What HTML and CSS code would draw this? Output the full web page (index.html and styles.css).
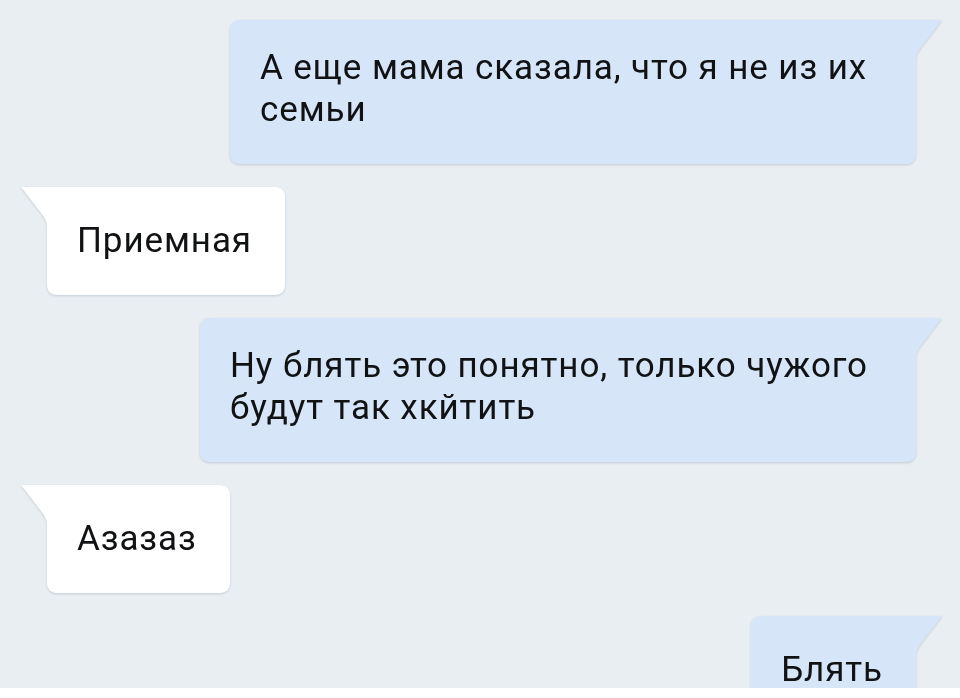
FILE: index.html
```html
<!DOCTYPE html>
<html lang="ru">
<head>
<meta charset="utf-8">
<title>Чат</title>
<link rel="stylesheet" href="styles.css">
</head>
<body>
<div class="screen">
  <div class="chat">
    <div class="msg in ghost" aria-hidden="true"></div>
    <div class="msg out w-686">А еще мама сказала, что я не из их семьи</div>
    <div class="msg in">Приемная</div>
    <div class="msg out w-716">Ну блять это понятно, только чужого будут так хкйтить</div>
    <div class="msg in">Азазаз</div>
    <div class="msg out">Блять</div>
  </div>
  <div class="composer"></div>
</div>
</body>
</html>
```

FILE: styles.css
```css
* { box-sizing: border-box; }

html, body {
  margin: 0;
  padding: 0;
  background: #e9eef2;
}

.screen {
  width: 960px;
  height: 698px;
  display: flex;
  flex-direction: column;
  overflow: hidden;
}

.chat {
  flex: 1;
  min-height: 0;
  overflow: hidden;
  display: flex;
  flex-direction: column;
  align-items: flex-start;
  gap: 23px;
  padding: 0 44px 0 47px;
  font-family: Roboto, "Noto Sans", sans-serif;
  font-size: 35px;
  letter-spacing: 0.9px;
  line-height: 42px;
  color: #111214;
}

.msg {
  position: relative;
  flex: none;
  display: flex;
  align-items: flex-end;
  min-height: 108px;
  padding: 27px 33px 33px 30px;
  border-radius: 9px;
  filter: drop-shadow(0 1px 1px rgba(60, 80, 110, 0.22));
}

.msg::before {
  content: "";
  position: absolute;
  top: 0;
  width: 27px;
  height: 42px;
  background: inherit;
}

.msg.out {
  align-self: flex-end;
  background: #d6e6f8;
  border-top-right-radius: 0;
}

.msg.out::before {
  right: -26px;
  clip-path: path("M0 0 H27 L4 30 Q1 35 0 42 Z");
}

.msg.in {
  align-self: flex-start;
  background: #ffffff;
  border-top-left-radius: 0;
}

.msg.in::before {
  left: -26px;
  clip-path: path("M27 0 H0 L23 30 Q26 35 27 42 Z");
}

.msg.ghost {
  width: 178px;
  margin-left: 3px;
  margin-top: -111px;
}

.w-686 { width: 686px; }
.w-716 { width: 716px; }

.composer {
  flex: none;
  height: 10px;
  background: #ffffff;
}
```
